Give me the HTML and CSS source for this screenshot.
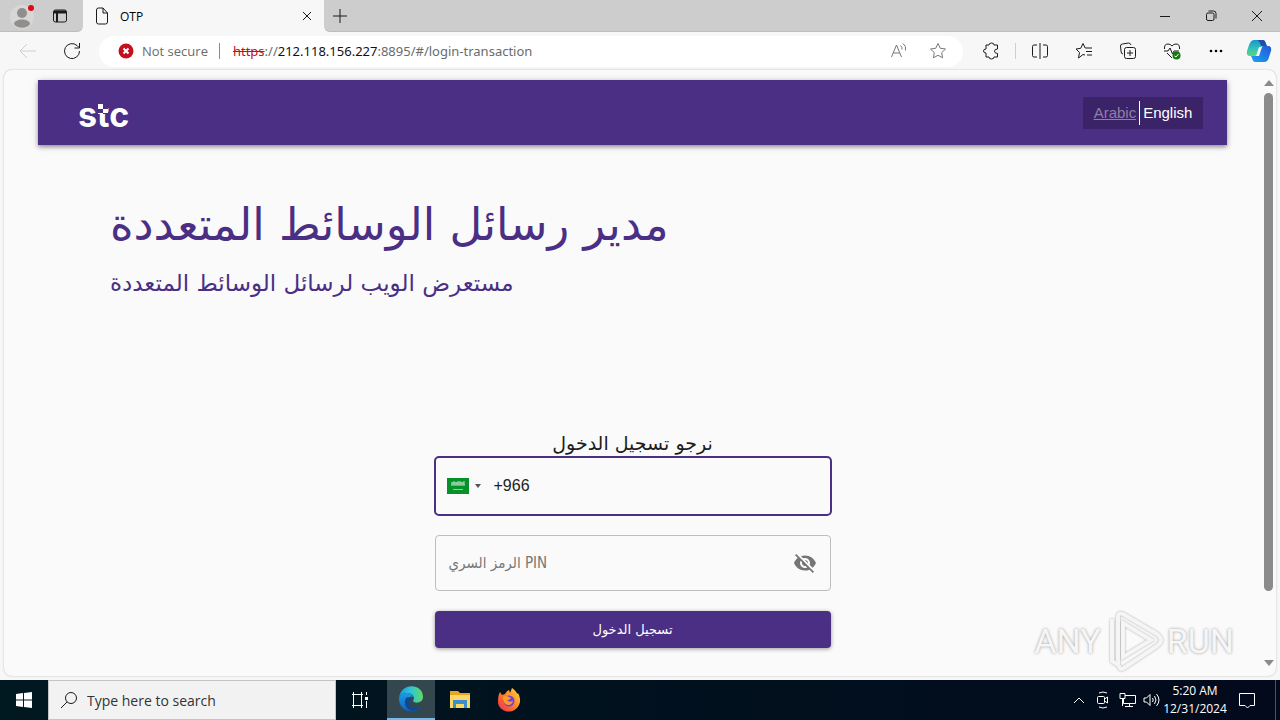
FILE: index.html
```html
<!DOCTYPE html>
<html lang="en">
<head>
    <meta charset="UTF-8">
    <meta name="viewport" content="width=device-width, initial-scale=1.0">
    <title>OTP</title>
    <link rel="stylesheet" href="styles.css">
</head>
<body>
    <div class="tabs">
        <div class="tabs-left">
            <button class="btn" aria-label="Profile">
                <svg width="28" height="28" viewBox="0 0 28 28"><circle cx="14" cy="15" r="12" fill="#d9d6d3"/><circle cx="14" cy="11" r="5" fill="#918f8d"/><path d="M6 22c0-6 16-6 16 0-3 5-13 5-16 0z" fill="#918f8d"/><circle cx="23" cy="6" r="3" fill="#d90b16"/></svg>
            </button>
            <button class="btn" aria-label="Tab actions">
                <svg class="line" width="16" height="16" viewBox="0 0 16 16"><rect x="1.500" y="2" width="13" height="12" rx="2"/><path d="M2 4h12" stroke-width="3"/><path d="M5 5v9" stroke-width="2"/></svg>
            </button>
        </div>
        <div class="tab">
            <svg class="line" width="14" height="18" viewBox="0 0 14 18"><path d="M1.500 3q0-2 2-2H8l4.500 5v9q0 2-2 2h-7q-2 0-2-2zM8 1v5h4.500"/></svg>
            <span class="tab-name">OTP</span>
            <button class="btn close" aria-label="Close tab"><svg class="line" width="10" height="10" viewBox="0 0 10 10"><path d="M1 1l8 8M9 1L1 9"/></svg></button>
        </div>
        <div class="tabs-rest">
            <button class="btn new-tab" aria-label="New tab"><svg class="line" width="14" height="14" viewBox="0 0 14 14"><path d="M7 0v14M0 7h14"/></svg></button>
            <div class="win">
                <button class="btn" aria-label="Minimize"><svg class="line" width="12" height="12" viewBox="0 0 12 12"><path d="M1 6.500h10"/></svg></button>
                <button class="btn" aria-label="Restore"><svg class="line" width="12" height="12" viewBox="0 0 12 12"><rect x="1.500" y="3" width="7.500" height="7.500" rx="1.500"/><path d="M3.500 1h5Q11 1 11 3.500v5"/></svg></button>
                <button class="btn" aria-label="Close"><svg class="line" width="12" height="12" viewBox="0 0 12 12"><path d="M1 1l10 10M11 1L1 11"/></svg></button>
            </div>
        </div>
    </div>

    <div class="toolbar">
        <button class="btn tool off" aria-label="Back"><svg class="line" width="18" height="16" viewBox="0 0 18 16"><path d="M17 8H1M8 1L1 8l7 7"/></svg></button>
        <button class="btn tool" aria-label="Refresh"><svg class="line" width="18" height="18" viewBox="0 0 18 18"><path d="M16.500 9A7.500 7.500 0 1 1 14 3.500L16 5.500M16.500 1v5h-5"/></svg></button>
        <div class="address">
            <svg width="16" height="16" viewBox="0 0 16 16"><circle cx="8" cy="8" r="7.500" fill="#c50f1f"/><path d="M5.500 5.500l5 5M10.500 5.500l-5 5" stroke="#fff" stroke-width="2"/></svg>
            <span class="secure">Not secure</span>
            <span class="url"><s>https</s>://<b>212.118.156.227</b>:8895/#/login-transaction</span>
            <button class="btn small" aria-label="Read aloud"><svg class="line" width="18" height="18" viewBox="0 0 18 18"><path d="M1.500 15L6.500 3l5 12M3.500 11h6M10.500 3.500q2 1.500 1.500 4M13 1.500q3.500 2.500 2.500 7"/></svg></button>
            <button class="btn small" aria-label="Add to favorites"><svg class="line" width="18" height="18" viewBox="0 0 18 18"><path d="M9 1.500l2.300 4.800 5.200.7-3.800 3.600.9 5.200L9 13.300l-4.600 2.500.9-5.200L1.500 7l5.200-.7z"/></svg></button>
        </div>
        <button class="btn tool" aria-label="Extensions"><svg class="line" width="18" height="18" viewBox="0 0 18 18"><path d="M4 3h3q0-2 2.500-2T12 3h3.500v4q-3 0-3 2.200t3 2.200V15H12q0 2-2.500 2T7 15H4v-4Q1.500 11 1.500 9T4 7z"/></svg></button>
        <span class="split"></span>
        <button class="btn tool" aria-label="Split screen"><svg class="line" width="18" height="18" viewBox="0 0 18 18"><path d="M6 3H3Q1.500 3 1.500 4.500v9Q1.500 15 3 15h3M12 3h3q1.500 0 1.500 1.500v9q0 1.500-1.500 1.500h-3M9 1v16"/></svg></button>
        <button class="btn tool" aria-label="Favorites"><svg class="line" width="18" height="18" viewBox="0 0 18 18"><path d="M10 13l-2-.5L3.500 16l1-5.500L1 7l4.700-.7L8 1.500 10.200 6H17M11 9.500h6M12 13h5"/></svg></button>
        <button class="btn tool" aria-label="Collections"><svg class="line" width="18" height="18" viewBox="0 0 18 18"><rect x="5.500" y="5.500" width="11" height="11" rx="2"/><path d="M11 8v6M8 11h6M4 12Q2 12 2 9L1.500 4Q1.500 2 3.500 2l6-1q2 0 2.500 2"/></svg></button>
        <button class="btn tool" aria-label="Browser essentials"><svg class="line" width="18" height="18" viewBox="0 0 18 18"><path d="M1.500 7Q1 2 5 2q2.500 0 4 2 1.500-2 4-2 4 0 3.500 5M1 9h4l2-3 2.500 6L11 9h5M4 11l5 5"/><circle cx="13.500" cy="13.500" r="4" fill="#107c10" stroke="none"/><path d="M11.500 14l1.500 1 2.500-3" stroke="#fff"/></svg></button>
        <button class="btn tool" aria-label="Settings and more"><svg width="14" height="4" viewBox="0 0 14 4"><circle cx="2" cy="2" r="1.300"/><circle cx="7" cy="2" r="1.300"/><circle cx="12" cy="2" r="1.300"/></svg></button>
        <button class="btn copilot" aria-label="Copilot">
            <svg width="26" height="24" viewBox="0 0 26 24">
                <defs>
                    <linearGradient id="cop1" x1="0" y1="0" x2="0" y2="1"><stop offset="0" stop-color="#1795cf"/><stop offset=".6" stop-color="#35c7b2"/><stop offset="1" stop-color="#5fd27a"/></linearGradient>
                    <linearGradient id="cop2" x1="1" y1="0" x2="0" y2="1"><stop offset="0" stop-color="#2257d6"/><stop offset="1" stop-color="#1ba5f5"/></linearGradient>
                </defs>
                <path d="M8 1h9q2 0 3 4l1 2h-4q-3 0-4 4l-1 3q-1 3-4 3H4q-4 0-3-5l2-6q2-5 5-5z" fill="url(#cop1)"/>
                <path d="M11 1h6q2 0 3 4l1 2h-6q-1-5-4-6z" fill="#1d4fa8"/>
                <path d="M18 7h4q4 0 3 5l-2 6q-1 5-5 5H9q-2 0-3-4l-1-2h4q3 0 4-4l1-3q1-3 4-3z" fill="url(#cop2)"/>
                <path d="M13 8h3l-3 9h-3z" fill="#f7f7f7"/>
            </svg>
        </button>
    </div>

    <div class="view">
        <main class="page">
            <header class="bar">
                <div class="logo">
                    stc
                    <svg width="11" height="12" viewBox="0 0 11 12"><path d="M0 0h11v12H0z" fill="#4a2f85"/><path d="M1 2h5v5H1zM6 7h5v4H6zM1 11h5v1H1z" fill="#fff"/></svg>
                </div>
                <nav class="lang">
                    <a class="now" href="#ar">Arabic</a>
                    <a href="#en">English</a>
                </nav>
            </header>
            <h1>مدير رسائل الوسائط المتعددة</h1>
            <h2>مستعرض الويب لرسائل الوسائط المتعددة</h2>
            <form class="login">
                <label class="login-title" for="phone">نرجو تسجيل الدخول</label>
                <div class="field phone">
                    <button type="button" class="btn flag" aria-label="Saudi Arabia">
                        <svg width="22" height="16" viewBox="0 0 22 16"><path d="M0 0h22v16H0z" fill="#07912b"/><path d="M5 4v3M7 3v4M9 4v3M11 3v4M13 3v4M15 4v3M17 3v4M4 7h14M5 5h12" stroke="#b9dfc1" fill="none"/><path d="M6 11.500h10" stroke="#8fcf9d"/></svg>
                        <svg width="6" height="4" viewBox="0 0 6 4"><path d="M0 0h6L3 4z" fill="#555"/></svg>
                    </button>
                    <input type="tel" id="phone" value="+966">
                </div>
                <div class="field pin">
                    <input type="password" id="pin" placeholder="الرمز السري PIN" aria-label="PIN">
                    <button type="button" class="btn" aria-label="Show PIN">
                        <svg width="24" height="24" viewBox="0 0 24 24" fill="#757575"><path d="M12 7c2.760 0 5 2.240 5 5 0 .650-.130 1.260-.360 1.830l2.920 2.920c1.510-1.260 2.700-2.890 3.430-4.750-1.730-4.390-6-7.500-11-7.500-1.400 0-2.740.250-3.980.700l2.160 2.160C10.740 7.130 11.350 7 12 7zM2 4.270l2.280 2.280.460.460C3.080 8.300 1.780 10.020 1 12c1.730 4.390 6 7.500 11 7.500 1.550 0 3.030-.300 4.380-.840l.420.420L19.730 22 21 20.730 3.270 3 2 4.270zM7.530 9.800l1.550 1.550c-.050.210-.080.430-.080.650 0 1.660 1.340 3 3 3 .220 0 .440-.030.650-.080l1.550 1.550c-.670.330-1.410.530-2.200.530-2.760 0-5-2.240-5-5 0-.790.200-1.530.530-2.200zm4.310-.780l3.150 3.150.020-.160c0-1.660-1.340-3-3-3l-.170.010z"/></svg>
                    </button>
                </div>
                <button type="submit" class="submit">تسجيل الدخول</button>
            </form>
        </main>
        <div class="scroll">
            <svg width="10" height="6" viewBox="0 0 10 6"><path d="M0 6h10L5 0z"/></svg>
            <div class="track"><div class="thumb"></div></div>
            <svg width="10" height="6" viewBox="0 0 10 6"><path d="M0 0h10L5 6z"/></svg>
        </div>
        <!-- watermark floats over the page -->
        <div class="mark">
            <span>ANY</span>
            <svg width="60" height="64" viewBox="0 0 60 64"><path d="M8 10v42l6 4V8q0-5 5-3l34 20q4 3 4 6t-4 6L20 59q-5 3-5-3M19 14v34l28-17z"/></svg>
            <span>RUN</span>
        </div>
    </div>

    <div class="taskbar">
        <button class="btn task" aria-label="Start"><svg width="16" height="16" viewBox="0 0 16 16" fill="#fff"><path d="M0 2l7-1v6.500H0zM8 1l8-1v7.500H8zM0 8.500h7V15l-7-1zM8 8.500h8V16l-8-1z"/></svg></button>
        <label class="search">
            <svg class="line" width="18" height="18" viewBox="0 0 18 18"><circle cx="11" cy="7" r="5.500"/><path d="M7 11l-6 6"/></svg>
            <input type="text" placeholder="Type here to search" aria-label="Search">
        </label>
        <button class="btn task view-btn" aria-label="Task View"><svg class="line light" width="16" height="16" viewBox="0 0 16 16"><path d="M0 2.500h11M0 13.500h11M1.500 2.500v11M9.500 2.500v11M1.500 0v2M9.500 0v2M1.500 14v2M9.500 14v2M14.500 0v3M14.500 9v7"/><path d="M13 5h3v3h-3z" fill="#fff" stroke="none"/></svg></button>
        <button class="btn task open" aria-label="Edge">
            <svg width="26" height="26" viewBox="0 0 26 26">
                <defs>
                    <linearGradient id="edge1" x1="0" y1="0" x2="1" y2="0"><stop offset="0" stop-color="#2096dd"/><stop offset=".5" stop-color="#32c4d4"/><stop offset="1" stop-color="#5fda62"/></linearGradient>
                    <linearGradient id="edge2" x1="0" y1="0" x2="0" y2="1"><stop offset="0" stop-color="#1b9de2"/><stop offset="1" stop-color="#1160c4"/></linearGradient>
                </defs>
                <path d="M1 13C2-4 25-3 25 11c0 6-8 7-10 4 3-5-2-8-6-8-5 0-8 3-8 6z" fill="url(#edge1)"/>
                <path d="M1 13c0-3 3-6 8-6 3 0 6 2 6 4-4-1-6 2-5 6 2 6 8 7 13 3-3 5-8 6-12 5C5 24 1 19 1 13z" fill="url(#edge2)"/>
                <path d="M8 12c-3 5 0 12 6 13 4 0 7-2 9-5-5 3-11 1-12-4 0-2 1-3 2-4-2-1-4-1-5 0z" fill="#114a8b"/>
            </svg>
        </button>
        <button class="btn task" aria-label="File Explorer"><svg width="22" height="20" viewBox="0 0 22 20"><path d="M1 1h8l2 2h10v15H1z" fill="#e8a526"/><path d="M1 5h20v13H1z" fill="#fbd768"/><path d="M4 10h14v8h-3v-4H7v4H4z" fill="#3a8fd0"/></svg></button>
        <button class="btn task" aria-label="Firefox">
            <svg width="24" height="24" viewBox="0 0 24 24">
                <defs><linearGradient id="fox" x1="1" y1="0" x2="0" y2="1"><stop offset="0" stop-color="#ffe14a"/><stop offset=".45" stop-color="#ff8a22"/><stop offset="1" stop-color="#ef2354"/></linearGradient></defs>
                <path d="M3 4l2 3 3-1c1-2 2-3 4-4l1 3 2-5c4 3 5 5 5 6l1-1c2 4 3 8 1 12-5 10-19 8-21-2C1 11 1 7 3 4z" fill="url(#fox)"/>
                <circle cx="12" cy="13" r="5.500" fill="#7542d8"/>
                <path d="M6 9q3-2 6 0l2 1q-1 2-4 2 2 3 6 1-1 4-5 4-5-1-5-8z" fill="#ff9a24"/>
            </svg>
        </button>
        <div class="tray">
            <button class="btn" aria-label="Show hidden icons"><svg class="line light" width="12" height="8" viewBox="0 0 12 8"><path d="M1 7l5-5 5 5"/></svg></button>
            <button class="btn" aria-label="Meet Now"><svg class="line light" width="14" height="18" viewBox="0 0 14 18"><rect x="1.500" y="5.500" width="7" height="7" rx="1"/><path d="M8.500 8l3-2v6l-3-2M3 2q4-2 8 0M3 16q4 2 8 0"/></svg></button>
            <button class="btn" aria-label="Network"><svg class="line light" width="17" height="16" viewBox="0 0 17 16"><path d="M6 3.500h10.500v8H4.500V7M10.500 11.500v3M6 14.500h8"/><path d="M1 1.500h5v5H1zM3.500 6.500V14"/></svg></button>
            <button class="btn" aria-label="Volume"><svg class="line light" width="17" height="14" viewBox="0 0 17 14"><path d="M1 5h2.500L7 1.500v11L3.500 9H1zM9.500 5q1.500 2 0 4M11.500 3q3 4 0 8M13.500 1q5 6 0 12"/></svg></button>
            <div class="clock">5:20 AM<br>12/31/2024</div>
            <button class="btn note" aria-label="Notifications"><svg class="line light" width="18" height="18" viewBox="0 0 18 18"><path d="M1.500 2.500h15v12H12L9.500 17 7 14.500H1.500z"/></svg></button>
        </div>
    </div>
</body>
</html>
```
FILE: styles.css
```css
*{ box-sizing: border-box;}
body{
    margin: 0;
    height: 100vh;
    display: flex;
    flex-direction: column;
    background: #f7f7f7;
    font-family: "Open Sans", "Noto Sans", sans-serif;
    font-size: 13px;
    overflow: hidden;
}
.btn{
    display: flex;
    align-items: center;
    justify-content: center;
    padding: 0;
    border: 0;
    background: none;
}
.line{
    fill: none;
    stroke: #1b1b1b;
}
.light{ stroke: #fff;}

/* tab strip */
.tabs{
    display: flex;
    height: 32px;
    flex: none;
}
.tabs-left{
    display: flex;
    width: 83px;
    padding: 0 11px 0 8px;
    justify-content: space-between;
    background: #cdcdcd;
    border-bottom: 1px solid #bdbdbd;
    border-bottom-right-radius: 6px;
}
.tabs-left .btn:last-child{ width: 24px;}
.tab{
    display: flex;
    align-items: center;
    width: 241px;
    padding: 0 8px 0 12px;
}
.tab-name{
    flex: 1;
    margin-left: 11px;
    font-size: 12px;
}
.close{
    width: 18px;
    height: 24px;
}
.tabs-rest{
    display: flex;
    flex: 1;
    justify-content: space-between;
    background: #cdcdcd;
    border-bottom: 1px solid #bdbdbd;
    border-bottom-left-radius: 6px;
}
.new-tab{ width: 32px;}
.win{ display: flex;}
.win .btn{ width: 46px;}

/* toolbar */
.toolbar{
    display: flex;
    align-items: center;
    flex: none;
    height: 38px;
    padding-left: 6px;
}
.tool{
    width: 44px;
    height: 30px;
}
.off .line{ stroke: #cfcfcf;}
.address{
    display: flex;
    align-items: center;
    flex: 1;
    height: 31px;
    margin: 0 6px 0 5px;
    padding: 0 6px 0 19px;
    border-radius: 16px;
    background: #fff;
    color: #6b6b6b;
}
.secure{
    margin-left: 8px;
    padding-right: 11px;
    border-right: 1px solid #8a8a8a;
    line-height: 16px;
}
.url{
    flex: 1;
    margin-left: 13px;
    font-family: "Noto Sans", sans-serif;
    white-space: nowrap;
}
.url s{ color: #c50f1f;}
.url b{
    color: #111;
    font-weight: normal;
}
.small{
    width: 39px;
    height: 30px;
}
.small .line{ stroke: #777;}
.split{
    width: 1px;
    height: 16px;
    margin: 0 2px;
    background: #cfcfcf;
}
.copilot{
    width: 42px;
    height: 30px;
}

/* web page */
.view{
    position: relative;
    display: flex;
    flex: 1;
    min-height: 0;
    margin: 0 4px 4px;
    border-radius: 8px;
    background: #fafafa;
    box-shadow: 0 0 2px #b5b5b5;
    overflow: hidden;
}
.page{
    flex: 1;
    padding: 10px 34px 0;
    font-family: "DejaVu Sans", sans-serif;
}
.bar{
    display: flex;
    align-items: center;
    justify-content: space-between;
    height: 65px;
    padding: 0 24px 0 40px;
    background: #4a2f85;
    box-shadow: 0 2px 4px rgba(0, 0, 0, .35), 0 1px 8px rgba(0, 0, 0, .15);
}
.logo{
    position: relative;
    padding-top: 4px;
    color: #fff;
    font: bold 34px/50px Inter, sans-serif;
}
/* squares on top of the t */
.logo svg{
    position: absolute;
    left: 19px;
    top: 16px;
}
.lang{
    display: flex;
    align-items: center;
    justify-content: center;
    width: 120px;
    height: 32px;
    background: #3b2367;
    font: 15px/24px "Liberation Sans", sans-serif;
}
.lang a{
    padding: 0 3px;
    color: #fff;
    text-decoration: none;
}
.lang .now{
    border-right: 1px solid #fff;
    color: #8f7fa9;
    text-decoration: underline;
}
h1, h2{
    margin: 0 72px;
    color: #4a2f85;
    font-weight: normal;
    white-space: nowrap;
}
h1{
    margin-top: 44px;
    font-size: 45px;
    line-height: 72px;
}
h2{
    margin-top: 4px;
    font-size: 23px;
    line-height: 36px;
}
.login{
    display: flex;
    flex-direction: column;
    max-width: 398px;
    margin: 129px auto 0;
}
.login-title{
    font-size: 19px;
    line-height: 26px;
    text-align: center;
    color: #1d1d1d;
}
.field{
    display: flex;
    align-items: center;
    height: 56px;
    border: 1px solid #bdbdbd;
    border-radius: 4px;
}
.field input{
    flex: 1;
    min-width: 0;
    padding: 0;
    border: 0;
    outline: 0;
    background: none;
    font: 16px "Liberation Sans", "DejaVu Sans", sans-serif;
    color: #222;
}
.phone{
    height: 60px;
    border: 2px solid #4a2f85;
    border-radius: 5px;
}
.flag{
    gap: 6px;
    margin: 0 13px 0 11px;
}
.pin{
    margin: 19px 1px 20px;
    padding: 0 13px;
}
.pin input{ font: 15px "Liberation Sans Narrow", "DejaVu Sans Condensed", "DejaVu Sans", sans-serif;}
.pin input::placeholder{
    color: #777;
    opacity: 1;
}
.submit{
    height: 37px;
    margin: 0 1px;
    border: 0;
    border-radius: 4px;
    background: #4a2f85;
    box-shadow: 0 1px 4px rgba(0, 0, 0, .4);
    color: #fff;
    font: 13px "DejaVu Sans", sans-serif;
}

/* scrollbar */
.scroll{
    display: flex;
    flex-direction: column;
    align-items: center;
    width: 15px;
    padding: 10px 0;
    fill: #8b8b8b;
}
.track{
    flex: 1;
    width: 9px;
    margin: 7px 0;
}
.thumb{
    height: 89%;
    border-radius: 5px;
    background: #8b8b8b;
}

.mark{
    position: absolute;
    right: 42px;
    bottom: 3px;
    display: flex;
    align-items: center;
    gap: 3px;
    color: #f6f6f6;
    font: 34px/64px Roboto, "Liberation Sans", sans-serif;
    text-shadow: 0 0 3px #999;
}
.mark svg{
    fill: none;
    stroke: #f5f5f5;
    stroke-width: 4;
    filter: drop-shadow(0 0 1px #aaa);
}

/* taskbar */
.taskbar{
    display: flex;
    flex: none;
    height: 40px;
    background: linear-gradient(90deg, #001820, #020a1c);
}
.task{
    width: 48px;
    margin-right: 1px;
}
.task:first-child{ margin-right: 0;}
.view-btn{ margin-right: 3px;}
.open{
    background: #34474f;
    border-bottom: 2px solid #76b9ed;
}
.search{
    display: flex;
    align-items: center;
    width: 288px;
    padding: 0 11px;
    border: 1px solid #c4c4c4;
    background: #f2f2f2;
}
.search input{
    flex: 1;
    margin-left: 9px;
    padding: 0;
    border: 0;
    outline: 0;
    background: none;
    font: 14px "Open Sans", sans-serif;
}
.search input::placeholder{
    color: #333;
    opacity: 1;
}
.tray{
    display: flex;
    margin: 0 4px 0 auto;
    padding-right: 8px;
    border-right: 1px solid #4a5364;
    color: #fff;
}
.tray .btn{ width: 24px;}
.clock{
    width: 64px;
    padding-top: 2px;
    font-size: 12px;
    line-height: 18px;
    text-align: center;
}
.tray .note{ width: 40px;}
```
